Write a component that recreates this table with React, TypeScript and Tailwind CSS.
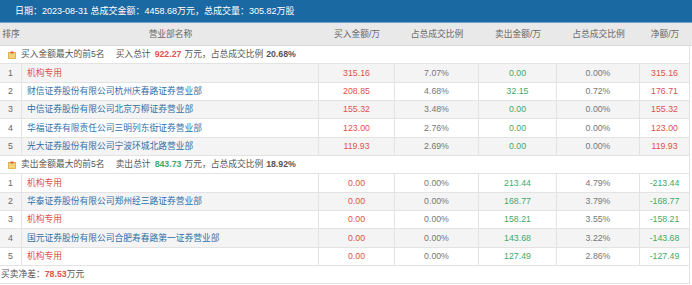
type Row = {
  n: number;
  name: string;
  buy: string;
  buyPct: string;
  sell: string;
  sellPct: string;
  net: string;
};

const buyRows: Row[] = [
  { n: 1, name: "机构专用", buy: "315.16", buyPct: "7.07%", sell: "0.00", sellPct: "0.00%", net: "315.16" },
  { n: 2, name: "财信证券股份有限公司杭州庆春路证券营业部", buy: "208.85", buyPct: "4.68%", sell: "32.15", sellPct: "0.72%", net: "176.71" },
  { n: 3, name: "中信证券股份有限公司北京万柳证券营业部", buy: "155.32", buyPct: "3.48%", sell: "0.00", sellPct: "0.00%", net: "155.32" },
  { n: 4, name: "华福证券有限责任公司三明列东街证券营业部", buy: "123.00", buyPct: "2.76%", sell: "0.00", sellPct: "0.00%", net: "123.00" },
  { n: 5, name: "光大证券股份有限公司宁波环城北路营业部", buy: "119.93", buyPct: "2.69%", sell: "0.00", sellPct: "0.00%", net: "119.93" },
];

const sellRows: Row[] = [
  { n: 1, name: "机构专用", buy: "0.00", buyPct: "0.00%", sell: "213.44", sellPct: "4.79%", net: "-213.44" },
  { n: 2, name: "华泰证券股份有限公司郑州经三路证券营业部", buy: "0.00", buyPct: "0.00%", sell: "168.77", sellPct: "3.79%", net: "-168.77" },
  { n: 3, name: "机构专用", buy: "0.00", buyPct: "0.00%", sell: "158.21", sellPct: "3.55%", net: "-158.21" },
  { n: 4, name: "国元证券股份有限公司合肥寿春路第一证券营业部", buy: "0.00", buyPct: "0.00%", sell: "143.68", sellPct: "3.22%", net: "-143.68" },
  { n: 5, name: "机构专用", buy: "0.00", buyPct: "0.00%", sell: "127.49", sellPct: "2.86%", net: "-127.49" },
];

const cols = "grid grid-cols-[22px_297px_76px_84px_78px_83px_50px]";

function NoteIcon() {
  return (
    <svg width="8" height="8" viewBox="0 0 8 8" className="shrink-0">
      <rect x="0.5" y="1.5" width="7" height="6" fill="#f3d37a" stroke="#d9a83a" strokeWidth="0.8" />
      <rect x="2.5" y="0.5" width="3" height="2" fill="#e0583f" />
    </svg>
  );
}

function Section({ label, kind, total, pct }: { label: string; kind: string; total: string; pct: string }) {
  const isBuy = kind === "买入";
  return (
    <div className="flex items-center h-[18.33px] pl-[8px] bg-white border-b border-[#e3e3e3] text-[#555]">
      <NoteIcon />
      <span className="ml-[5px]">{label}</span>
      <span className="ml-[11px]">{kind}总计</span>
      <span className={`ml-[4px] font-bold ${isBuy ? "text-[#e4504a]" : "text-[#3fa96a]"}`}>{total}</span>
      <span className="ml-[3px]">万元，占总成交比例</span>
      <span className="ml-[3px] font-bold text-[#555]">{pct}</span>
    </div>
  );
}

function DataRow({ r, gray }: { r: Row; gray: boolean }) {
  const inst = r.name === "机构专用";
  const neg = r.net.startsWith("-");
  const cell = "flex items-center justify-center border-r border-[#e3e3e3]";
  return (
    <div className={`${cols} h-[18.33px] border-b border-[#e3e3e3] ${gray ? "bg-[#f4f4f4]" : "bg-white"}`}>
      <div className={`${cell} text-[#666]`}>{r.n}</div>
      <div className={`flex items-center pl-[5px] border-r border-[#e3e3e3] ${inst ? "text-[#e4504a]" : "text-[#2f6fa8]"}`}>
        {r.name}
      </div>
      <div className={`${cell} text-[#e4504a]`}>{r.buy}</div>
      <div className={`${cell} text-[#777]`}>{r.buyPct}</div>
      <div className={`${cell} text-[#3fa96a]`}>{r.sell}</div>
      <div className={`${cell} text-[#777]`}>{r.sellPct}</div>
      <div className={`${cell} ${neg ? "text-[#3fa96a]" : "text-[#e4504a]"}`}>{r.net}</div>
    </div>
  );
}

export default function App() {
  return (
    <div
      className="w-[692px] h-[285px] bg-white overflow-hidden text-[8.75px] leading-none"
      style={{ fontFamily: '"Liberation Sans", "Noto Sans CJK SC", sans-serif' }}
    >
      <div className="h-[23px] bg-[#1a69a2] border-b border-[#6fa3cf] flex items-center pl-[15px] text-white text-[9px]">
        日期：2023-08-31 总成交金额：4458.68万元，总成交量：305.82万股
      </div>
      <div className={`${cols} h-[23px] bg-[#e9e9e9] border-b border-[#dadada] text-[#666] pr-[2px] w-[692px]`}>
        <div className="flex items-center justify-center">排序</div>
        <div className="flex items-center justify-center">营业部名称</div>
        <div className="flex items-center justify-center">买入金额/万</div>
        <div className="flex items-center justify-center">占总成交比例</div>
        <div className="flex items-center justify-center">卖出金额/万</div>
        <div className="flex items-center justify-center">占总成交比例</div>
        <div className="flex items-center justify-center">净额/万</div>
      </div>
      <div className="w-[690px] border-r border-[#e3e3e3]">
        <Section label="买入金额最大的前5名" kind="买入" total="922.27" pct="20.68%" />
        {buyRows.map((r, i) => (
          <DataRow key={`b${r.n}`} r={r} gray={i % 2 === 0} />
        ))}
        <Section label="卖出金额最大的前5名" kind="卖出" total="843.73" pct="18.92%" />
        {sellRows.map((r, i) => (
          <DataRow key={`s${r.n}`} r={r} gray={i % 2 === 1} />
        ))}
        <div className="flex items-center h-[18.33px] pl-[1px] border-b border-[#e3e3e3] text-[#555]">
          买卖净差：<span className="font-bold text-[#e4504a]">78.53</span>万元
        </div>
      </div>
    </div>
  );
}
